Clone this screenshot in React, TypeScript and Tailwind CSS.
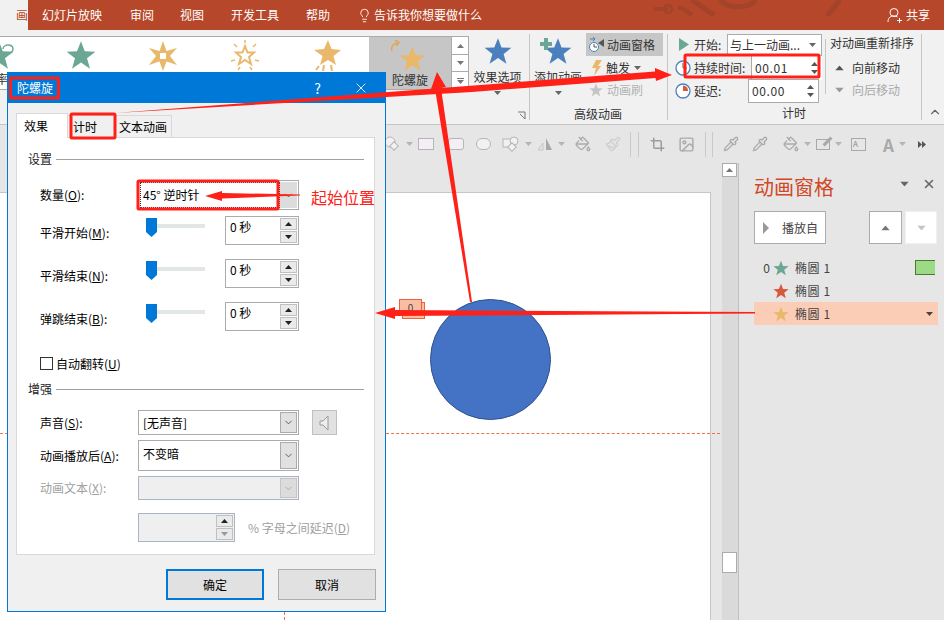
import React from 'react';
import { ChevronDown, Crop, Image, Lightbulb, PaintBucket, Paintbrush, Pipette, X } from 'lucide-react';

const STAR = '12,1 15,9 23.5,9.3 16.8,14.5 19.2,23 12,18 4.8,23 7.2,14.5 0.5,9.3 8.8,9';

const Star = ({ size, color, className = '' }: { size: number; color: string; className?: string }) => (
  <svg width={size} height={size} viewBox="0 0 24 24" className={`shrink-0 ${className}`}>
    <polygon points={STAR} fill={color} />
  </svg>
);

const Caret = ({ up = false, color = '#666666', className = '' }: { up?: boolean; color?: string; className?: string }) => (
  <svg width="7" height="4" viewBox="0 0 7 4" className={`shrink-0 ${className}`}>
    <polygon points={up ? '3.5,0 7,4 0,4' : '0,0 7,0 3.5,4'} fill={color} />
  </svg>
);

const Clock = ({ delay = false }: { delay?: boolean }) => (
  <svg width="16" height="16" viewBox="0 0 16 16" className="shrink-0">
    <circle cx="8" cy="8" r="7" fill="#fff" stroke="#4a80be" strokeWidth="1.3" />
    {delay ? <path d="M8 2.5V8h5A5 5 0 0 0 8 2.5z" fill="#d9573a" /> : <path d="M8 3v5h4" fill="none" stroke="#555" strokeWidth="1" />}
  </svg>
);

// ---- ribbon

const GalleryItem = ({ children, className = '' }: { children: React.ReactNode; className?: string }) => (
  <div className={`flex w-[82px] shrink-0 justify-center pt-[3px] ${className}`}>{children}</div>
);

const Gallery = () => (
  <div className="ml-[-1px] mt-[6px] flex h-[54px] w-[470px] shrink-0">
    <div className="relative flex flex-1 overflow-hidden border border-[#ababab] bg-white">
      <div className="ml-[-42px] flex w-[411px] shrink-0">
        <GalleryItem>
          <div className="relative">
            <Star size={30} color="#6ba794" />
            <svg width="14" height="14" viewBox="0 0 14 14" className="absolute right-[-2px] top-[2px]">
              <path d="M1 7a5 4 0 1 1 6 4" fill="none" stroke="#6ba794" strokeWidth="1.5" />
            </svg>
          </div>
        </GalleryItem>
        <GalleryItem>
          <div className="relative">
            <Star size={30} color="#6ba794" />
            <svg width="12" height="14" viewBox="0 0 12 14" className="absolute bottom-[-4px] right-[-4px]">
              <path d="M1 6l3 6L10 1" fill="none" stroke="#9cc4b6" strokeWidth="1.2" />
            </svg>
          </div>
        </GalleryItem>
        <GalleryItem>
          <div className="relative">
            <svg width="32" height="32" viewBox="0 0 32 32">
              <polygon points="16,1 19.5,11 30,8 23,16 30,25 19.5,21.5 16,31 12.5,21.5 2,25 9,16 2,8 12.5,11" fill="#e9b86b" />
              <rect x="13" y="13" width="6" height="6" fill="#fff" />
            </svg>
          </div>
        </GalleryItem>
        <GalleryItem>
          <svg width="32" height="32" viewBox="0 0 32 32">
            <polygon points="16,6 18.5,12.5 25,12.5 20,17 22,24 16,20 10,24 12,17 7,12.5 13.5,12.5" fill="#fff" stroke="#e9b86b" strokeWidth="2" />
            <path d="M16 0v3M5 4l3 3M27 4l-3 3M2 21l4-1M30 21l-4-1M9 30l2-3M23 30l-2-3" stroke="#e9b86b" strokeWidth="1.5" />
          </svg>
        </GalleryItem>
        <GalleryItem>
          <svg width="30" height="32" viewBox="0 0 30 32">
            <polygon points="16,0 19.5,9 29,10 21.5,16 24,25 16,20 8,25 10.5,16 2,10 12,9" fill="#e9b86b" />
            <path d="M7 26l-3 4M12 25l-1 6M19 25l1 6" stroke="#e9b86b" strokeWidth="2" />
          </svg>
        </GalleryItem>
      </div>
      <span className="absolute left-[-4px] top-[35px] text-[12px] leading-[14px] text-[#333]">率</span>
      <div className="flex w-[83px] flex-col items-center bg-[#c6c6c6]">
        <div className="relative mt-[6px]">
          <Star size={27} color="#e9b86b" className="ml-[5px] mt-[2px]" />
          <svg width="12" height="12" viewBox="0 0 12 12" className="absolute left-[-3px] top-[-3px]">
            <path d="M1 11a6 6 0 0 1 5-8M4 0l4 2.5L5 6" fill="none" stroke="#e3a34a" strokeWidth="1.4" />
          </svg>
        </div>
        <span className="mt-[1px] text-[12px] leading-[14px] text-[#333]">陀螺旋</span>
      </div>
    </div>
    <div className="flex w-[17px] flex-col border border-l-0 border-[#ababab] bg-white">
      <div className="flex h-[18px] items-center justify-center border-b border-[#ababab]"><Caret up color="#777" /></div>
      <div className="flex h-[17px] items-center justify-center border-b border-[#ababab]"><Caret color="#777" /></div>
      <div className="flex flex-1 flex-col items-center justify-center gap-[1px]"><div className="h-px w-[7px] bg-[#777]" /><Caret color="#777" /></div>
    </div>
  </div>
);

const BigButton = ({ label, plus = false, w }: { label: string; plus?: boolean; w: string }) => (
  <div className={`flex shrink-0 flex-col items-center ${w}`}>
    <div className="relative mt-[7px]">
      <Star size={28} color="#4a80be" />
      {plus && (
        <svg width="12" height="12" viewBox="0 0 12 12" className="absolute left-[-4px] top-[1px]">
          <path d="M4 0h4v4h4v4H8v4H4V8H0V4h4z" fill="#6ba794" />
        </svg>
      )}
    </div>
    <span className="mt-[4px] whitespace-nowrap text-[12px] leading-[16px] text-[#333]">{label}</span>
    <Caret className="mt-[6px]" />
  </div>
);

const VSep = ({ className = '' }: { className?: string }) => <div className={`w-px shrink-0 bg-[#c6c6c6] ${className}`} />;

const Spin = () => (
  <div className="flex flex-col gap-[4px]">
    <Caret up color="#555" />
    <Caret color="#555" />
  </div>
);

const AdvancedGroup = () => (
  <div className="relative flex w-[137px] shrink-0 flex-col">
    <div className="flex">
      <BigButton label="添加动画" plus w="w-[56px]" />
      <div className="mt-[3px] flex flex-col text-[12px] text-[#333]">
        <div className="flex h-[23px] w-[77px] items-center gap-[2px] bg-[#c6c6c6] pl-[3px]">
          <svg width="16" height="16" viewBox="0 0 16 16" className="shrink-0">
            <circle cx="5" cy="10" r="4.5" fill="#fff" stroke="#4a80be" />
            <path d="M5 7v3h3" fill="none" stroke="#555" />
            <polygon points="9,6 15,2 15,10" fill="#555" />
            <path d="M1 2h5M4 0l2 2-2 2" fill="none" stroke="#4a80be" />
          </svg>
          <span className="whitespace-nowrap">动画窗格</span>
        </div>
        <div className="mt-[1px] flex h-[22px] items-center gap-[4px] pl-[6px]">
          <svg width="10" height="16" viewBox="0 0 10 16"><polygon points="4,0 10,0 6,6 9,6 2,16 4,8 0,8" fill="#e9b86b" /></svg>
          <span>触发</span>
          <Caret />
        </div>
        <div className="flex h-[22px] items-center gap-[4px] pl-[3px] text-[#b1b1b1]">
          <Star size={14} color="#c4c4c4" />
          <span className="whitespace-nowrap">动画刷</span>
        </div>
      </div>
    </div>
    <span className="absolute bottom-[2px] left-[44px] text-[12px] leading-[16px] text-[#333]">高级动画</span>
  </div>
);

const TimingRow = ({ icon, label, value, w, hi = false }: { icon: React.ReactNode; label: string; value: string; w: string; hi?: boolean }) => (
  <div className="flex h-[23px] items-center text-[12px] text-[#333]">
    <div className="flex w-[19px] justify-start">{icon}</div>
    <span className="whitespace-nowrap">{label}</span>
    <div className={`ml-auto flex h-[24px] items-center justify-between bg-white pl-[3px] pr-[4px] ${w} ${hi ? 'border-l border-[#ababab]' : 'mr-[3px] border border-[#ababab]'}`}>
      <span className="text-[12px] tracking-wider">{value}</span>
      <Spin />
    </div>
  </div>
);

const TimingGroup = () => (
  <div className="relative flex w-[253px] shrink-0 pl-[7px] pt-[3px]">
    <div className="flex w-[147px] shrink-0 flex-col">
      <div className="flex h-[23px] items-center whitespace-nowrap text-[12px] text-[#333]">
        <svg width="11" height="15" viewBox="0 0 11 15" className="ml-[3px] mr-[5px] shrink-0"><polygon points="1,1 11,7.5 1,14" fill="#6ba794" /></svg>
        <span>开始:</span>
        <div className="ml-auto flex h-[22px] w-[95px] shrink-0 items-center justify-between border border-[#ababab] bg-white pl-[2px] pr-[5px]">
          <span className="whitespace-nowrap">与上一动画...</span>
          <Caret />
        </div>
      </div>
      <TimingRow icon={<Clock />} label="持续时间:" value="00.01" w="w-[71px]" hi />
      <TimingRow icon={<Clock delay />} label="延迟:" value="00.00" w="w-[71px]" />
    </div>
    <VSep className="ml-[3px] mr-[4px] mt-[6px] h-[55px]" />
    <div className="flex flex-col text-[12px] text-[#333]">
      <span className="mt-[1px] whitespace-nowrap leading-[18px]">对动画重新排序</span>
      <div className="mt-[5px] flex h-[22px] items-center gap-[9px] pl-[6px]"><Caret up color="#555" className="scale-125" /><span>向前移动</span></div>
      <div className="flex h-[22px] items-center gap-[9px] pl-[6px] text-[#a9a9a9]"><Caret color="#999" className="scale-125" /><span>向后移动</span></div>
    </div>
    <span className="absolute bottom-[3px] left-[114px] text-[12px] leading-[16px] text-[#333]">计时</span>
  </div>
);

const Ribbon = () => (
  <div className="flex h-[95px] border-b border-[#c6c6c6] bg-[#f1f1f1]">
    <Gallery />
    <BigButton label="效果选项" w="w-[57px]" />
    <div className="relative w-[3px] shrink-0">
      <svg width="9" height="9" viewBox="0 0 9 9" className="absolute bottom-[4px] left-[-9px]">
        <path d="M1 1h7v7M3 3l5 5" fill="none" stroke="#777" />
      </svg>
    </div>
    <VSep className="mb-[4px] mt-[4px]" />
    <AdvancedGroup />
    <VSep className="mb-[4px] mt-[4px]" />
    <TimingGroup />
    <VSep className="mb-[4px] mt-[4px]" />
    <div className="flex flex-1 items-end justify-end pb-[5px] pr-[2px]">
      <ChevronDown size={14} className="rotate-180 text-[#666]" />
    </div>
  </div>
);

// ---- top tabs

const TopTabs = () => (
  <div className="relative flex h-[30px] overflow-hidden bg-[#b7472a] text-[12px] text-white">
    <svg width="240" height="16" viewBox="0 0 240 16" className="absolute left-[640px] top-0" fill="none" stroke="#a2432a">
      <path d="M14 9h14M38 8h4l10 7" strokeWidth="4" />
      <circle cx="28" cy="9" r="4" strokeWidth="2.5" />
      <path d="M52 0l22 15M80 0a20 12 0 0 0 36 0M200 0l-13 16" strokeWidth="5" />
    </svg>
    <div className="flex h-full w-[28px] items-center justify-end bg-[#f1f1f1] text-[#b7472a]">画</div>
    <div className="relative ml-[14px] flex h-full items-center">
      <span className="w-[60px]">幻灯片放映</span>
      <span className="ml-[28px]">审阅</span>
      <span className="ml-[26px]">视图</span>
      <span className="ml-[27px]">开发工具</span>
      <span className="ml-[27px]">帮助</span>
      <Lightbulb size={15} strokeWidth={1.4} className="ml-[27px]" />
      <span className="ml-[2px] whitespace-nowrap">告诉我你想要做什么</span>
    </div>
    <div className="relative ml-auto mr-[14px] flex h-full items-center gap-[3px]">
      <svg width="16" height="17" viewBox="0 0 16 17" fill="none" stroke="#fff">
        <circle cx="7" cy="5.5" r="4" />
        <path d="M1 15c0-4 2-6 6-6 1.5 0 2.5.3 3.5 1M12.5 11v5M10 13.5h5" />
      </svg>
      <span>共享</span>
    </div>
  </div>
);

// ---- formatting strip

const Tri = () => <Caret color="#b5b5b5" className="ml-[5px]" />;

const FormatStrip = () => (
  <div className="flex h-[38px] items-center bg-[#e6e6e6] pl-[386px] text-[#ababab]">
    <svg width="18" height="18" viewBox="0 0 18 18" fill="#f3eff5" stroke="#b5b5b5" className="ml-[-3px] shrink-0"><circle cx="7" cy="7" r="5" /><rect x="8" y="8" width="6" height="6" transform="rotate(45 11 11)" /></svg>
    <Tri />
    <div className="ml-[5px] h-[12px] w-[16px] shrink-0 border border-[#b5b5b5] bg-[#f3eff5]" />
    <div className="ml-[14px] h-[12px] w-[16px] shrink-0 rounded-[3px] border border-[#b5b5b5] bg-[#f3eff5]" />
    <div className="ml-[12px] h-[12px] w-[15px] shrink-0 rounded-full border border-[#b5b5b5] bg-[#f3eff5]" />
    <svg width="18" height="16" viewBox="0 0 18 16" fill="#f3eff5" stroke="#b5b5b5" className="ml-[11px] shrink-0"><rect x="1" y="3" width="8" height="8" /><circle cx="12" cy="5" r="4" /><rect x="7" y="8" width="6" height="6" transform="rotate(45 10 11)" /></svg>
    <Tri />
    <svg width="16" height="14" viewBox="0 0 16 14" className="ml-[5px] shrink-0"><polygon points="9,1 15,13 9,13" fill="#a9a9a9" /><polygon points="6,6 6,13 1,13" fill="none" stroke="#c4c4c4" /></svg>
    <Tri />
    <PaintBucket size={16} className="ml-[10px] shrink-0" />
    <Paintbrush size={16} className="ml-[14px] shrink-0 text-[#cfcfcf]" />
    <VSep className="ml-[9px] h-[25px] bg-[#c9c9c9]" />
    <VSep className="ml-[7px] h-[25px] bg-[#c9c9c9]" />
    <Crop size={15} strokeWidth={2.4} className="ml-[11px] shrink-0 text-[#9c9c9c]" />
    <Image size={17} className="ml-[13px] shrink-0 text-[#a9a9a9]" />
    <VSep className="ml-[10px] h-[25px] bg-[#c9c9c9]" />
    <VSep className="ml-[6px] h-[25px] bg-[#c9c9c9]" />
    <Pipette size={16} className="ml-[10px] shrink-0" />
    <Pipette size={16} className="ml-[13px] shrink-0" />
    <PaintBucket size={16} className="ml-[15px] shrink-0" />
    <Tri />
    <div className="relative ml-[5px] h-[11px] w-[14px] shrink-0 border border-[#a9a9a9]">
      <span className="absolute left-[9px] top-[-4px] h-[11px] w-[3px] rotate-45 bg-[#a9a9a9]" />
    </div>
    <Tri />
    <div className="ml-[9px] flex h-[13px] w-[15px] shrink-0 items-center border border-[#a9a9a9] pl-px text-[8px] leading-none text-[#888]">A</div>
    <span className="ml-[17px] text-[17px] font-semibold leading-none text-[#a9a9a9]">A</span>
    <Tri />
    <svg width="8" height="7" viewBox="0 0 8 7" className="ml-[12px] shrink-0"><path d="M0 0l4 3.5L0 7zM4 0l4 3.5L4 7z" fill="#555" /></svg>
  </div>
);

// ---- animation pane

const PaneRow = ({ color, num, active = false, bar = false }: { color: string; num?: string; active?: boolean; bar?: boolean }) => (
  <div className={`flex h-[23px] items-center text-[12px] text-[#444] ${active ? 'bg-[#fccdb6]' : ''}`}>
    <span className="w-[16px] shrink-0 text-right">{num}</span>
    <Star size={16} color={color} className="ml-[3px]" />
    <span className="ml-[6px] tracking-wider">椭圆 1</span>
    {bar && <div className="ml-auto mr-[3px] h-[15px] w-[20px] border border-[#4a7a2e] border-r-0 bg-[#9dda86]" />}
    {active && <Caret color="#444" className="ml-auto mr-[5px]" />}
  </div>
);

const AnimationPane = () => (
  <div className="w-[205px] shrink-0 border-l border-[#c0c0c0] bg-[#e6e6e6] pl-[15px] pr-[5px]">
    <div className="mt-[10px] flex h-[28px] items-center">
      <span className="text-[20px] leading-[28px] text-[#d24726]">动画窗格</span>
      <Caret color="#666" className="mb-[6px] ml-auto mr-[14px] scale-125" />
      <X size={14} strokeWidth={2.6} className="mb-[6px] mr-[2px] text-[#666]" />
    </div>
    <div className="mt-[10px] flex">
      <div className="flex h-[33px] w-[72px] items-center border border-[#ababab] bg-white pl-[8px] text-[12px] text-[#444]">
        <svg width="6" height="12" viewBox="0 0 6 12"><polygon points="0,0 6,6 0,12" fill="#999" /></svg>
        <span className="ml-[13px]">播放自</span>
      </div>
      <div className="ml-[43px] flex h-[33px] w-[33px] items-center justify-center border border-[#ababab] bg-white"><Caret up color="#777" className="scale-125" /></div>
      <div className="ml-[3px] flex h-[33px] w-[32px] items-center justify-center border border-[#f0f0f0] bg-white"><Caret color="#c4c4c4" className="scale-125" /></div>
    </div>
    <div className="mt-[12px]">
      <PaneRow color="#6ba794" num="0" bar />
      <PaneRow color="#d9573a" />
      <PaneRow color="#e9b86b" active />
    </div>
  </div>
);

// ---- slide canvas

const Workspace = () => (
  <div className="flex flex-1 overflow-hidden">
    <div className="flex w-[722px] shrink-0 flex-col pr-[11px] pt-[29px]">
      <div className="relative flex-1 border-r border-t border-[#c6c6c6] bg-white">
        <div className="absolute left-0 right-[-10px] top-[240px] border-t border-dashed border-[#f2704a]" />
        <div className="absolute bottom-0 left-[284px] top-0 border-l border-dashed border-[#f2704a]" />
        <div className="absolute left-[430px] top-[106px] h-[121px] w-[121px] rounded-full border border-[#2f528f] bg-[#4472c4]" />
        <div className="absolute left-[402px] top-[109px] h-[17px] w-[23px] border border-[#e8623c] bg-[#f9bda4]" />
        <div className="absolute left-[399px] top-[106px] flex h-[16px] w-[23px] items-center justify-center border border-[#e8623c] bg-[#f9bda4] text-[10px] text-[#444]">0</div>
      </div>
    </div>
    <div className="flex w-[16px] shrink-0 flex-col justify-between bg-[#dadada] pb-[47px]">
      <div className="flex h-[14px] w-[15px] items-center justify-center border border-[#ababab] bg-white"><Caret up color="#777" /></div>
      <div className="h-[21px] w-[15px] border border-[#ababab] bg-white" />
    </div>
    <AnimationPane />
  </div>
);

// ---- dialog

const Sunken = 'border border-[#ababab] bg-white';

const Combo = ({ text, h, w = 'w-[161px]', cls = 'items-center', dim = false }: { text: string; h: string; w?: string; cls?: string; dim?: boolean }) => (
  <div className={`flex ${h} ${w} border p-px ${dim ? 'border-[#a9b4c4] bg-[#efefef]' : 'border-[#ababab] bg-white'}`}>
    <span className={`flex flex-1 px-[3px] text-[12px] text-black ${cls}`}>{text}</span>
    <div className={`flex w-[17px] items-center justify-center border ${dim ? 'border-[#c6c6c6] bg-[#dcdcdc] text-[#a9a9a9]' : 'border-[#ababab] bg-[#e1e1e1] text-[#555]'}`}>
      <ChevronDown size={11} />
    </div>
  </div>
);

const SmallSpin = ({ dim = false }: { dim?: boolean }) => (
  <div className="flex w-[17px] flex-col gap-px">
    <div className="flex flex-1 items-center justify-center border border-[#c0c0c0] bg-[#eaeaea]"><Caret up color="#222" /></div>
    <div className="flex flex-1 items-center justify-center border border-[#c0c0c0] bg-[#eaeaea]"><Caret color={dim ? '#999' : '#222'} /></div>
  </div>
);

const Heading = ({ text, className = '' }: { text: string; className?: string }) => (
  <div className={`flex h-[16px] items-center pl-[11px] pr-[10px] ${className}`}>
    <span className="text-[12px] text-[#222]">{text}</span>
    <div className="ml-[4px] h-px flex-1 bg-[#a0a0a0]" />
  </div>
);

const Row = ({ label, hot, tail = ':', children, className = '', dim = false, labelClass = '' }: { label: string; hot: string; tail?: string; children: React.ReactNode; className?: string; dim?: boolean; labelClass?: string }) => (
  <div className={`flex items-center pl-[23px] ${className}`}>
    <span className={`w-[98px] shrink-0 whitespace-nowrap text-[12px] ${dim ? 'text-[#a0a0a0]' : 'text-black'} ${labelClass}`}>
      {label}(<span className="underline">{hot}</span>){tail}
    </span>
    {children}
  </div>
);

const SliderRow = ({ label, hot, className = '' }: { label: string; hot: string; className?: string }) => (
  <Row label={label} hot={hot} className={`h-[29px] ${className}`} labelClass="pt-[4px]">
    <div className="relative ml-[8px] h-[29px] w-[79px]">
      <div className="absolute left-[4px] top-[8px] h-[4px] w-[55px] bg-[#e3e7e3]" />
      <svg width="11" height="19" viewBox="0 0 11 19" className="absolute left-0 top-[2px]"><polygon points="0,0 11,0 11,14 5.5,19 0,14" fill="#0078d7" /></svg>
    </div>
    <div className={`flex h-[29px] w-[74px] p-px ${Sunken}`}>
      <span className="flex-1 pl-[3px] text-[12px] leading-[18px] text-black">0 秒</span>
      <SmallSpin />
    </div>
  </Row>
);

const Dialog = () => (
  <div className="absolute left-[7px] top-[72px] flex h-[540px] w-[379px] flex-col border border-[#0078d7] bg-[#f0f0f0]">
    <div className="flex h-[30px] shrink-0 items-center bg-[#0078d7] pl-[9px] pr-[16px] text-[12px] text-white">
      <span>陀螺旋</span>
      <span className="ml-auto mr-[32px] text-[14px]">?</span>
      <X size={16} strokeWidth={1.3} />
    </div>
    <div className="flex h-[34px] items-end pl-[8px] text-[12px] text-black">
      <div className="z-10 mb-[-1px] flex h-[25px] w-[52px] border border-b-0 border-[#d9d9d9] bg-white pl-[7px] pt-[3px]">效果</div>
      <div className="flex h-[22px] w-[47px] items-center border border-l-0 border-b-0 border-[#d9d9d9] pl-[5px]">计时</div>
      <div className="flex h-[22px] w-[57px] items-center justify-center border border-l-0 border-b-0 border-[#d9d9d9] bg-[#f0f0f0]">文本动画</div>
    </div>
    <div className="ml-[8px] h-[418px] w-[359px] border border-[#d9d9d9] bg-white pt-[13px]">
      <Heading text="设置" />
      <Row label="数量" hot="O" className="mt-[13px] h-[30px]">
        <div className={`flex h-[30px] w-[161px] ${Sunken} p-px`}>
          <span className="flex flex-1 items-center border border-dotted border-[#333] pl-[2px] text-[12px] text-black">45° 逆时针</span>
          <div className="flex w-[17px] items-center justify-center bg-[#dcdcdc] text-[#555]"><ChevronDown size={11} /></div>
        </div>
      </Row>
      <SliderRow label="平滑开始" hot="M" className="mt-[6px]" />
      <SliderRow label="平滑结束" hot="N" className="mt-[14px]" />
      <SliderRow label="弹跳结束" hot="B" className="mt-[14px]" />
      <label className="ml-[23px] mt-[25px] flex h-[15px] items-center text-[12px] text-black">
        <span className="h-[13px] w-[13px] border border-[#333] bg-white" />
        <span className="ml-[3px]">自动翻转(<span className="underline">U</span>)</span>
      </label>
      <Heading text="增强" className="mt-[10px]" />
      <Row label="声音" hot="S" className="mt-[13px] h-[25px]">
        <Combo text="[无声音]" h="h-[25px]" />
        <div className="ml-[13px] flex h-[25px] w-[25px] items-center justify-center border border-[#c0c0c0] bg-[#e1e1e1]">
          <svg width="12" height="16" viewBox="0 0 12 16"><polygon points="1,6 4,6 9,1 9,15 4,10 1,10" fill="#eee" stroke="#999" /></svg>
        </div>
      </Row>
      <Row label="动画播放后" hot="A" className="mt-[5px] h-[31px]">
        <Combo text="不变暗" h="h-[31px]" cls="items-start pt-[3px]" />
      </Row>
      <Row label="动画文本" hot="X" dim className="mt-[5px] h-[24px]">
        <Combo text="" h="h-[24px]" dim />
      </Row>
      <div className="ml-[121px] mt-[13px] flex h-[29px] items-center">
        <div className="flex h-[29px] w-[97px] border border-[#a9b4c4] bg-[#efefef] p-px">
          <span className="flex-1" />
          <SmallSpin dim />
        </div>
        <span className="ml-[13px] whitespace-nowrap text-[12px] text-[#a0a0a0]">% 字母之间延迟(<span className="underline">D</span>)</span>
      </div>
    </div>
    <div className="mr-[9px] mt-[14px] flex justify-end gap-[14px] text-[12px] text-black">
      <button className="h-[31px] w-[98px] border-2 border-[#0078d7] bg-[#e1e1e1]">确定</button>
      <button className="h-[31px] w-[98px] border border-[#adadad] bg-[#e1e1e1]">取消</button>
    </div>
  </div>
);

// ---- red markup drawn over the screenshot

const Markup = () => (
  <svg width="944" height="620" viewBox="0 0 944 620" className="pointer-events-none absolute left-0 top-0" fill="none">
    <g stroke="#ff2117" strokeWidth="3">
      <rect x="10.5" y="78" width="48" height="20" rx="1" />
      <rect x="71" y="114" width="44" height="24" rx="1" />
      <rect x="138" y="181" width="140" height="28" rx="1" />
      <rect x="685" y="55" width="134" height="22" rx="1" />
    </g>
    <g fill="#ff2117">
      <polygon points="115,113 655,71.5 655,68 672,75 656,81 655.5,78 472,92" />
      <polygon points="472,302 441,88 446,87 437,72 431,89 435,89 470,302" />
      <polygon points="755,313.5 395,316 395,319 375,313 395,307 395,310 755,312" />
      <polygon points="300,195.5 222,198.5 222,201 205,196 222,191 222,193 300,194.5" />
    </g>
  </svg>
);

export default function App() {
  return (
    <div className="relative flex h-[620px] w-[944px] flex-col overflow-hidden bg-[#e6e6e6] font-['Noto_Sans_CJK_SC','Liberation_Sans',sans-serif]">
      <TopTabs />
      <Ribbon />
      <FormatStrip />
      <Workspace />
      <Dialog />
      <Markup />
      <span className="absolute left-[311px] top-[186px] text-[16px] leading-[22px] text-[#ff2117]">起始位置</span>
    </div>
  );
}
